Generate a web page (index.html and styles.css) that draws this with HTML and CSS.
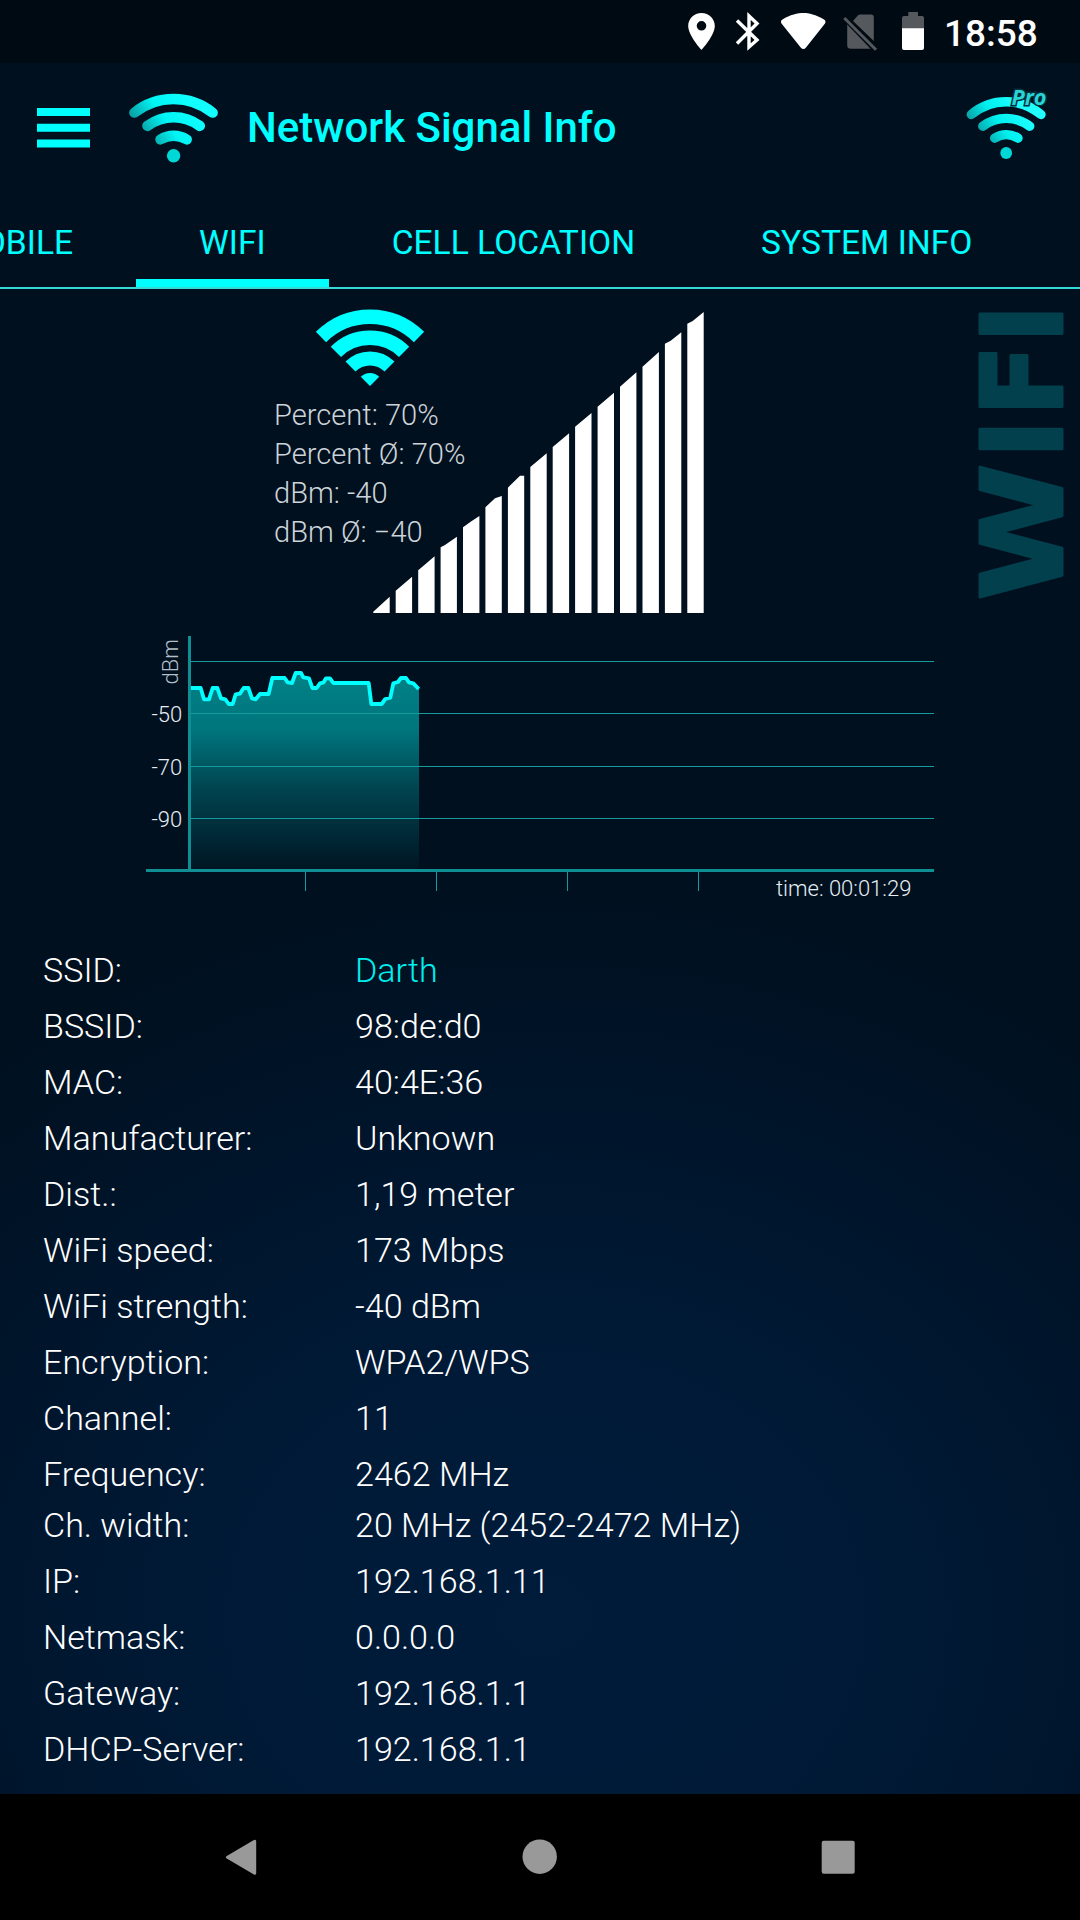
FILE: index.html
```html
<!DOCTYPE html>
<html lang="en">
<head>
<meta charset="utf-8">
<title>Network Signal Info</title>
<link rel="stylesheet" href="styles.css">
</head>
<body>
<div class="screen">
  <div class="statusbar">
    <svg class="status-icons" viewBox="0 0 246 63" width="246" height="63">
      <path fill="#fff" fill-rule="evenodd" d="M21.500 13c-7.500 0-13.300 5.700-13.300 13 0 9.500 13.300 24 13.300 24s13.300-14.500 13.300-24c0-7.300-5.800-13-13.300-13zm0 8a4.800 4.800 0 1 1 0 9.600a4.800 4.800 0 0 1 0-9.600z"/>
      <path fill="none" stroke="#fff" stroke-width="3.400" d="M57 20.500L77 40L69 47V16l8 7.500L57 43.500"/>
      <path fill="#fff" d="M120.700 47.500L101.500 23.500q-1.500-2.500 1-4C110 14.500 118 13 123.400 13s12.600 1.500 20.600 6.500q2.400 1.500 1 4L126 47.500q-2.600 3-5.300 0z"/>
      <path fill="#55585c" d="M173 21l5-5.700q1-.8 2.500-.8h10.500q2.800 0 2.800 2.800v23.800zM167.200 24.500L190.500 48.700h-19.800q-3.500 0-3.500-3.500z"/>
      <path stroke="#55585c" stroke-width="3" d="M164.300 18l31.700 31.700"/>
      <path fill="#55585c" d="M228.300 12h9.700v4h4q2 0 2 2v11h-22V18q0-2 2-2h4.300z"/>
      <path fill="#fff" d="M222 28.300h22V48q0 2-2 2h-18q-2 0-2-2z"/>
    </svg>
    <span class="clock">18:58</span>
  </div>

  <header class="appbar">
    <svg class="menu" viewBox="0 0 53 40" width="53" height="40"><path fill="#0ff" d="M0 0h53v8H0zM0 15.800h53v8H0zM0 31.500h53v8H0z"/></svg>
    <svg class="logo" viewBox="129 84 90 80" width="90" height="80">
      <defs><linearGradient id="cy" gradientUnits="userSpaceOnUse" x1="145" y1="138" x2="195" y2="104"><stop offset="0" stop-color="#0a9ba0"/><stop offset=".45" stop-color="#00f5f5"/><stop offset="1" stop-color="#1ff"/></linearGradient></defs>
      <g fill="none" stroke="url(#cy)" stroke-width="10.300" stroke-linecap="round">
        <path d="M134.300 112.700A63 63 0 0 1 212.700 112.700"/><path d="M147.300 126A44 44 0 0 1 199.900 126"/><path d="M160.400 139.500A25 25 0 0 1 186.800 139.500"/>
      </g>
      <circle cx="173.600" cy="155.800" r="6.700" fill="#00d8d8"/>
    </svg>
    <h1 class="title">Network Signal Info</h1>
    <svg class="pro" viewBox="960 80 96 84" width="96" height="84">
      <defs><linearGradient id="cp" gradientUnits="userSpaceOnUse" x1="980" y1="138" x2="1025" y2="106"><stop offset="0" stop-color="#0a9ba0"/><stop offset=".45" stop-color="#00f0f0"/><stop offset="1" stop-color="#2ff"/></linearGradient></defs>
      <g fill="none" stroke="url(#cp)" stroke-width="9.400" stroke-linecap="round">
        <path d="M971.300 114.500A54 54 0 0 1 1041 114.500"/><path d="M982.800 126.200A39 39 0 0 1 1029.700 126.200"/><path d="M994.700 138.200A21 21 0 0 1 1018 138.200"/>
      </g>
      <circle cx="1006.200" cy="153" r="5.900" fill="#00d8d8"/>
      <text class="pro-text" x="1011.500" y="104.500" textLength="35" lengthAdjust="spacingAndGlyphs">Pro</text>
    </svg>
  </header>

  <nav class="tabs">
    <span class="tab">MOBILE</span><span class="tab active">WIFI</span><span class="tab">CELL LOCATION</span><span class="tab">SYSTEM INFO</span>
  </nav>

  <section class="signal">
    <div class="readings">
      <svg class="wifi" viewBox="314 308 112 80" width="112" height="80">
        <g fill="none" stroke="#0ff">
          <path stroke-width="14.500" d="M321 337A69.300 69.300 0 0 1 419 337"/>
          <path stroke-width="14.500" d="M335.900 351.900A48.300 48.300 0 0 1 404.100 351.900"/>
          <path stroke-width="14" d="M350.500 366.500A27.500 27.500 0 0 1 389.500 366.500"/>
        </g>
        <path fill="#0ff" d="M370 386L360.800 376.800A13 13 0 0 1 379.200 376.800z"/>
      </svg>
      <ul class="lines"><li>Percent: 70%</li><li>Percent Ø: 70%</li><li>dBm: -40</li><li>dBm Ø: −40</li></ul>
    </div>
    <svg class="bars" viewBox="0 0 334 304" width="334" height="304">
      <path fill="#fff" d="M3.300 302.700L19.700 287.700V304H3.300z
M25.700 281.700L42.100 267.700V304H25.700z M48.200 261.300L64.600 247.300V304H48.200z M70.600 238.300L75 236L86.900 227.700V304H70.600z
M93 218.300L101 212.500L109.400 207V304H93z M115.400 198.300L125 189.300L131.800 187V304H115.400z M137.900 178.700L150 166.700H154.200V304H137.900z
M160.300 158L176.700 144.300V304H160.300z M182.700 138L199.100 124.300V304H182.700z M205.100 117.700L221.500 104V304H205.100z
M227.600 97.700L244 83.700V304H227.600z M250 77.700L266.400 63.300V304H250z M272.500 57.700L288.900 43V304H272.500z
M294.900 34.700L300.700 31.700L311.300 23.300V304H294.900z M317.300 14.700L322.700 12L333.700 3V304H317.300z"/>
    </svg>
    <svg class="watermark" viewBox="0 0 100 296" width="100" height="296">
      <g class="watermark-text">
        <text transform="translate(82.300 291.600) rotate(-90) scale(1.115 1)">W</text>
        <text transform="translate(82.300 149.500) rotate(-90) scale(.94 1)" x="0 45 122.700">IFI</text>
      </g>
    </svg>
  </section>

  <section class="history">
    <svg viewBox="130 620 820 290" width="820" height="290">
      <defs>
        <linearGradient id="area" gradientUnits="userSpaceOnUse" x1="0" y1="150" x2="0" y2="750"><stop offset="0" stop-color="#008287"/><stop offset=".3" stop-color="#00757c"/><stop offset=".6" stop-color="#00434f"/><stop offset="1" stop-color="#001522"/></linearGradient>
      </defs>
      <path fill="url(#area)" transform="translate(130 620) scale(.33333)" d="M183 750V204H212L222 238H237L248 204H262L273 235L286 238L296 252H308L317 223L330 221L341 204H355L366 235L377 238L390 222H416L427 174H464L473 187L486 189L497 159H513L520 172L537 175L547 204H560L570 190L581 187L588 175H600L610 189H716L724 252H755L766 237L781 233L790 190L804 186L813 174H828L837 187L850 190L867 207V750z"/>
      <path fill="none" stroke="#159a9d" stroke-width="1" d="M188 661.500H934M188 713.500H934M188 766.500H934M188 818.500H934M305.500 872V891M436.500 872V891M567.500 872V891M698.500 872V891"/>
      <path fill="none" stroke="#0f8f94" stroke-width="3" d="M189.500 636V872M146 870.500H934"/>
      <path fill="none" stroke="#0ff" stroke-width="11.500" stroke-linejoin="round" transform="translate(130 620) scale(.33333)" d="M183 204H212L222 238H237L248 204H262L273 235L286 238L296 252H308L317 223L330 221L341 204H355L366 235L377 238L390 222H416L427 174H464L473 187L486 189L497 159H513L520 172L537 175L547 204H560L570 190L581 187L588 175H600L610 189H716L724 252H755L766 237L781 233L790 190L804 186L813 174H828L837 187L850 190L866 207"/>
      <g class="chart-text">
        <text x="151.500" y="722">-50</text><text x="151.500" y="775">-70</text><text x="151.500" y="827">-90</text>
        <text class="dim" transform="translate(177.500 684.500) rotate(-90)">dBm</text>
        <text x="776" y="896">time: 00:01:29</text>
      </g>
    </svg>
  </section>

  <dl class="details">
    <dt>SSID:</dt><dd class="accent">Darth</dd>
    <dt>BSSID:</dt><dd>98:de:d0</dd>
    <dt>MAC:</dt><dd>40:4E:36</dd>
    <dt>Manufacturer:</dt><dd>Unknown</dd>
    <dt>Dist.:</dt><dd>1,19 meter</dd>
    <dt>WiFi speed:</dt><dd>173 Mbps</dd>
    <dt>WiFi strength:</dt><dd>-40 dBm</dd>
    <dt>Encryption:</dt><dd>WPA2/WPS</dd>
    <dt>Channel:</dt><dd>11</dd>
    <dt class="tight">Frequency:</dt><dd class="tight">2462 MHz</dd>
    <dt>Ch. width:</dt><dd>20 MHz (2452-2472 MHz)</dd>
    <dt>IP:</dt><dd>192.168.1.11</dd>
    <dt>Netmask:</dt><dd>0.0.0.0</dd>
    <dt>Gateway:</dt><dd>192.168.1.1</dd>
    <dt>DHCP-Server:</dt><dd>192.168.1.1</dd>
  </dl>

  <footer class="navbar">
    <svg viewBox="0 0 36 40" width="36" height="40"><path fill="#999" stroke="#999" stroke-width="3" stroke-linejoin="round" d="M3.500 20.200L30.700 4.200V36.200z"/></svg>
    <svg viewBox="0 0 36 40" width="36" height="40"><circle cx="17.700" cy="19.700" r="17.200" fill="#999"/></svg>
    <svg viewBox="0 0 36 40" width="36" height="40"><rect x="1.700" y="3.700" width="33" height="33" rx="2" fill="#999"/></svg>
  </footer>
</div>
</body>
</html>
```
FILE: styles.css
```css
* { box-sizing: border-box; margin: 0; padding: 0; }
body { width: 1080px; height: 1920px; overflow: hidden; background: #000; font-family: Roboto, sans-serif; }
svg { display: block; flex: none; }
.screen {
  width: 1080px; height: 1920px; display: flex; flex-direction: column; overflow: hidden;
  background: radial-gradient(ellipse 870px 720px at 545px 1617px, #001c3a 0%, #001a37 35%, #00162e 62%, #00101f 100%);
}
.statusbar { height: 63px; background: #000a12; display: flex; align-items: center; padding-left: 680px; flex: none; }
.clock { margin-left: 18px; color: #fff; font-size: 37px; font-weight: 500; line-height: 63px; padding-top: 3px; }
.appbar { height: 129px; display: flex; align-items: center; padding: 0 24px 0 36.500px; flex: none; }
.menu { margin-right: 39.500px; }
.logo { margin-top: -7px; }
.title { margin-left: 28px; font-size: 42px; font-weight: 500; line-height: 50px; color: #0ff; white-space: nowrap; }
.pro { margin-left: auto; margin-top: -11px; }
.pro-text { font: italic 700 21px "Open Sans", sans-serif; fill: #2ad4d6; stroke: #00303c; stroke-width: 3px; paint-order: stroke; }
.tabs { width: 1190px; height: 97px; flex: none; display: flex; border-bottom: 2px solid #35d9d8; margin-left: -109.600px; }
.tab { padding: 0 63px; height: 95px; line-height: 101px; font-size: 33.600px; color: #0ff; white-space: nowrap; }
.tab.active { border-bottom: 8px solid #0ff; }
.signal { height: 331px; flex: none; display: flex; }
.readings { width: 370px; padding-top: 19px; flex: none; }
.wifi { margin-left: 314px; }
.lines { list-style: none; margin-left: 274px; padding-top: 8px; white-space: nowrap; }
.lines li { font-size: 29.100px; font-weight: 300; line-height: 39px; color: #ccd3d9; }
.bars { margin-top: 20px; }
.watermark { margin: 20px 0 0 276px; overflow: visible; }
.watermark-text { font: 700 111.500px "DejaVu Sans", sans-serif; fill: #01404c; stroke: #01404c; stroke-width: 3px; stroke-linejoin: round; }
.history { padding-left: 130px; height: 321px; flex: none; }
.chart-text { font-size: 22px; font-weight: 300; fill: #e6eef4; }
.dim { fill: #b4bec6; }
.details { display: grid; grid-template-columns: 312px 1fr; padding: 1px 0 0 43px; flex: none; height: 853px; align-content: start; }
.details dt, .details dd { height: 56px; line-height: 56px; font-size: 34.100px; font-weight: 300; color: #fff; white-space: nowrap; }
.details .tight { height: 51px; }
.details .accent { color: #0ee; }
.navbar { height: 126px; flex: none; background: #000; display: flex; justify-content: space-between; align-items: center; padding: 0 224px; }
```
